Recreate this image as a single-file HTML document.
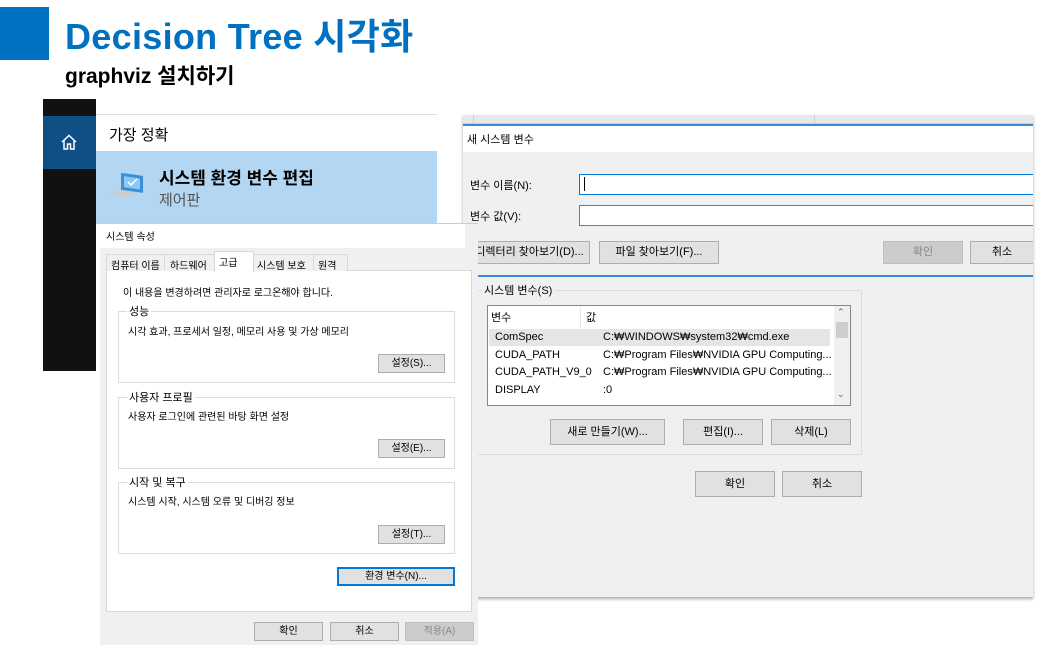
<!DOCTYPE html>
<html><head><meta charset="utf-8"><style>
*{margin:0;padding:0;box-sizing:border-box}
body{width:1052px;height:656px;background:#fff;position:relative;overflow:hidden;font-family:"Liberation Sans","Noto Sans CJK KR",sans-serif;color:#000}
.a{position:absolute}
.t{font-size:12px;white-space:nowrap}
.btn{position:absolute;background:#e1e1e1;border:1px solid #adadad;font-size:11px;text-align:center;white-space:nowrap}
.grp{position:absolute;border:1px solid #dcdcdc}
.lg{position:absolute;top:-9px;left:8px;background:#fff;padding:0 2px;font-size:11px}
</style></head><body>
<div class="a" style="left:0;top:7px;width:49px;height:53px;background:#0070c0"></div>
<div class="a" style="left:65px;top:8px;font-size:36px;font-weight:bold;color:#0070c0;white-space:nowrap;letter-spacing:0.3px">Decision Tree 시각화</div>
<div class="a" style="left:65px;top:60px;font-size:21px;font-weight:bold;white-space:nowrap">graphviz 설치하기</div>

<!-- start menu -->
<div class="a" style="left:43px;top:99px;width:53px;height:272px;background:#111"></div>
<div class="a" style="left:43px;top:116px;width:53px;height:53px;background:#0e4f85"></div>
<svg class="a" style="left:60px;top:134px" width="18" height="16" viewBox="0 0 18 16"><path d="M2 8 L9 1.5 L16 8 M4 6.5 V15 H7.5 V10 H10.5 V15 H14 V6.5" fill="none" stroke="#fff" stroke-width="1.5"/></svg>
<div class="a" style="left:96px;top:99px;width:341px;height:125px;background:#fff"></div>
<div class="a" style="left:96px;top:114px;width:341px;height:1px;background:#ddd"></div>
<div class="a t" style="left:109px;top:124px;font-size:15px">가장 정확</div>
<div class="a" style="left:96px;top:151px;width:341px;height:73px;background:#b3d7f2"></div>
<svg class="a" style="left:108px;top:168px" width="38" height="32" viewBox="0 0 38 32"><path d="M2 26 L14 30 L30 24 L18 20 Z" fill="#ccc"/><rect x="13" y="3" width="22" height="17" fill="#3b8fd6" transform="skewY(8)"/><rect x="16" y="6" width="16" height="11" fill="#8cc9f2" transform="skewY(8)"/><path d="M20 14 l3 3 l6 -6" stroke="#fff" stroke-width="1.5" fill="none"/></svg>
<div class="a t" style="left:159px;top:164px;font-size:17px;font-weight:bold">시스템 환경 변수 편집</div>
<div class="a t" style="left:159px;top:189px;font-size:15px;color:#555">제어판</div>

<!-- env vars window -->
<div class="a" style="left:463px;top:99px;width:570px;height:16px;background:#fff"></div>
<div class="a" style="left:463px;top:115px;width:570px;height:482px;background:#f0f0f0;box-shadow:0 2px 3px #aaa"></div>
<div class="a" style="left:463px;top:115px;width:570px;height:9px;background:#e8e8e8;border-bottom:1px solid #ccc"></div>
<div class="a" style="left:473px;top:115px;width:1px;height:9px;background:#ccc"></div>
<div class="a" style="left:814px;top:115px;width:1px;height:9px;background:#ccc"></div>
<!-- new var dialog -->
<div class="a" style="left:463px;top:124px;width:570px;height:2px;background:#3a8ad8"></div>
<div class="a" style="left:463px;top:126px;width:570px;height:26px;background:#fff"></div>
<div class="a t" style="left:467px;top:131px;font-size:11px">새 시스템 변수</div>
<div class="a" style="left:463px;top:152px;width:570px;height:123px;background:#f0f0f0"></div>
<div class="a t" style="left:470px;top:177px;font-size:11px">변수 이름(N):</div>
<div class="a t" style="left:470px;top:208px;font-size:11px">변수 값(V):</div>
<div class="a" style="left:579px;top:174px;width:454px;height:21px;background:#fff;border:1px solid #0078d7;border-right:none"></div>
<div class="a" style="left:584px;top:177px;width:1px;height:14px;background:#000"></div>
<div class="a" style="left:579px;top:205px;width:454px;height:21px;background:#fff;border:1px solid #7a7a7a;border-right:none"></div>
<div class="btn" style="left:469px;top:241px;width:121px;height:23px;line-height:21px">디렉터리 찾아보기(D)...</div>
<div class="btn" style="left:599px;top:241px;width:120px;height:23px;line-height:21px">파일 찾아보기(F)...</div>
<div class="btn" style="left:883px;top:241px;width:80px;height:23px;line-height:21px;background:#cccccc;border-color:#bfbfbf;color:#888">확인</div>
<div class="btn" style="left:970px;top:241px;width:63px;height:23px;line-height:21px;border-right:none">취소</div>
<div class="a" style="left:463px;top:275px;width:570px;height:2px;background:#3a8ad8"></div>
<!-- system vars group -->
<div class="grp" style="left:475px;top:290px;width:387px;height:165px"></div>
<div class="a t" style="left:482px;top:282px;font-size:11px;background:#f0f0f0;padding:0 2px">시스템 변수(S)</div>
<div class="a" style="left:487px;top:305px;width:364px;height:101px;background:#fff;border:1px solid #828790"></div>
<div class="a" style="left:580px;top:307px;width:1px;height:20px;background:#e5e5e5"></div>
<div class="a" style="left:489px;top:329px;width:341px;height:17px;background:#e5e5e5"></div>
<div class="a t" style="left:491px;top:309px;font-size:11px">변수</div>
<div class="a t" style="left:586px;top:309px;font-size:11px">값</div>
<div class="a t" style="left:495px;top:331px;font-size:11px">ComSpec</div>
<div class="a t" style="left:603px;top:331px;font-size:11px">C:₩WINDOWS₩system32₩cmd.exe</div>
<div class="a t" style="left:495px;top:349px;font-size:11px">CUDA_PATH</div>
<div class="a t" style="left:603px;top:349px;font-size:11px">C:₩Program Files₩NVIDIA GPU Computing...</div>
<div class="a t" style="left:495px;top:366px;font-size:11px">CUDA_PATH_V9_0</div>
<div class="a t" style="left:603px;top:366px;font-size:11px">C:₩Program Files₩NVIDIA GPU Computing...</div>
<div class="a t" style="left:495px;top:384px;font-size:11px">DISPLAY</div>
<div class="a t" style="left:603px;top:384px;font-size:11px">:0</div>
<div class="a" style="left:834px;top:306px;width:16px;height:99px;background:#f0f0f0"></div>
<div class="a" style="left:836px;top:322px;width:12px;height:16px;background:#cdcdcd"></div>
<div class="a t" style="left:837px;top:307px;font-size:9px;color:#606060">⌃</div>
<div class="a t" style="left:837px;top:389px;font-size:9px;color:#606060">⌄</div>
<div class="btn" style="left:550px;top:419px;width:115px;height:26px;line-height:24px">새로 만들기(W)...</div>
<div class="btn" style="left:683px;top:419px;width:80px;height:26px;line-height:24px">편집(I)...</div>
<div class="btn" style="left:771px;top:419px;width:80px;height:26px;line-height:24px">삭제(L)</div>
<div class="btn" style="left:695px;top:471px;width:80px;height:26px;line-height:24px">확인</div>
<div class="btn" style="left:782px;top:471px;width:80px;height:26px;line-height:24px">취소</div>

<!-- system properties -->
<div class="a" style="left:100px;top:223px;width:378px;height:422px;background:#f0f0f0;border-top:1px solid #ccc"></div>
<div class="a" style="left:100px;top:224px;width:365px;height:24px;background:#fff"></div>
<div class="a t" style="left:106px;top:228px;font-size:10px">시스템 속성</div>
<div class="a" style="left:106px;top:270px;width:366px;height:342px;background:#fff;border:1px solid #d9d9d9"></div>
<div class="a" style="left:106px;top:254px;width:242px;height:17px;background:#f0f0f0;border:1px solid #d9d9d9;border-bottom:none"></div>
<div class="a" style="left:214px;top:251px;width:40px;height:21px;background:#fff;border:1px solid #d9d9d9;border-bottom:none"></div>
<div class="a t" style="left:111px;top:257px;font-size:10px">컴퓨터 이름</div>
<div class="a" style="left:164px;top:255px;width:1px;height:15px;background:#d9d9d9"></div>
<div class="a t" style="left:170px;top:257px;font-size:10px">하드웨어</div>
<div class="a t" style="left:219px;top:254px;font-size:10px">고급</div>
<div class="a t" style="left:257px;top:257px;font-size:10px">시스템 보호</div>
<div class="a" style="left:313px;top:255px;width:1px;height:15px;background:#d9d9d9"></div>
<div class="a t" style="left:318px;top:257px;font-size:10px">원격</div>
<div class="a t" style="left:123px;top:284px;font-size:10px">이 내용을 변경하려면 관리자로 로그온해야 합니다.</div>
<div class="grp" style="left:118px;top:311px;width:337px;height:72px"><span class="lg">성능</span></div>
<div class="a t" style="left:128px;top:323px;font-size:10px">시각 효과, 프로세서 일정, 메모리 사용 및 가상 메모리</div>
<div class="btn" style="left:378px;top:354px;width:67px;height:19px;line-height:17px;font-size:10px">설정(S)...</div>
<div class="grp" style="left:118px;top:397px;width:337px;height:72px"><span class="lg">사용자 프로필</span></div>
<div class="a t" style="left:128px;top:408px;font-size:10px">사용자 로그인에 관련된 바탕 화면 설정</div>
<div class="btn" style="left:378px;top:439px;width:67px;height:19px;line-height:17px;font-size:10px">설정(E)...</div>
<div class="grp" style="left:118px;top:482px;width:337px;height:72px"><span class="lg">시작 및 복구</span></div>
<div class="a t" style="left:128px;top:493px;font-size:10px">시스템 시작, 시스템 오류 및 디버깅 정보</div>
<div class="btn" style="left:378px;top:525px;width:67px;height:19px;line-height:17px;font-size:10px">설정(T)...</div>
<div class="btn" style="left:337px;top:567px;width:118px;height:19px;line-height:16px;font-size:10px;border:2px solid #0078d7">환경 변수(N)...</div>
<div class="btn" style="left:254px;top:622px;width:69px;height:19px;line-height:17px;font-size:10px">확인</div>
<div class="btn" style="left:330px;top:622px;width:69px;height:19px;line-height:17px;font-size:10px">취소</div>
<div class="btn" style="left:405px;top:622px;width:69px;height:19px;line-height:17px;font-size:10px;background:#ccc;border-color:#bfbfbf;color:#888">적용(A)</div>
</body></html>
